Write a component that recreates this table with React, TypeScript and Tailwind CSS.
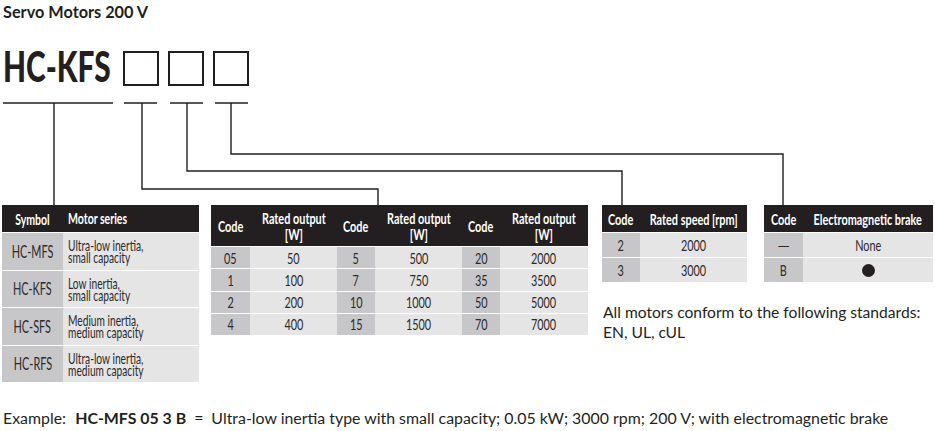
import React from "react";

const INK = "#231f20";

// Condensed look: Lato squeezed horizontally (no condensed face is installed)
const cond = "inline-block whitespace-nowrap scale-x-[0.68]";

const motorSeries = [
  { symbol: "HC-MFS", desc: ["Ultra-low inertia,", "small capacity"] },
  { symbol: "HC-KFS", desc: ["Low inertia,", "small capacity"] },
  { symbol: "HC-SFS", desc: ["Medium inertia,", "medium capacity"] },
  { symbol: "HC-RFS", desc: ["Ultra-low inertia,", "medium capacity"] },
];

const outputRows = [
  ["05", "50", "5", "500", "20", "2000"],
  ["1", "100", "7", "750", "35", "3500"],
  ["2", "200", "10", "1000", "50", "5000"],
  ["4", "400", "15", "1500", "70", "7000"],
];

const outputCols = ["w-[39px]", "w-[87px]", "w-[38px]", "w-[87px]", "w-[38px]", "w-[88px]"];

function Connectors() {
  return (
    <svg
      className="absolute left-0 top-0 pointer-events-none"
      width={935}
      height={431}
      viewBox="0 0 935 431"
      fill="none"
      stroke={INK}
      strokeWidth={1.4}
    >
      <path d="M3 103H113M54 103V205" />
      <path d="M124 103H157M142 103V189H378V205" />
      <path d="M170 103H203M187 103V171H622V205" />
      <path d="M215 103H248M231 103V154H783V205" />
    </svg>
  );
}

function HeadCell({ className, children }: { className: string; children: React.ReactNode }) {
  return (
    <div className={`flex min-w-0 items-center justify-center text-center leading-[16px] ${className}`}>
      <span className={cond}>{children}</span>
    </div>
  );
}

function MotorTable() {
  return (
    <div className="w-[197px]">
      <div className="flex h-[27px] bg-[#231f20] text-white font-bold text-[15.5px]">
        <HeadCell className="w-[61px]">Symbol</HeadCell>
        <div className="flex min-w-0 flex-1 items-center pl-[5px]">
          <span className={`${cond} origin-left`}>Motor series</span>
        </div>
      </div>
      {motorSeries.map((m) => (
        <div key={m.symbol} className="flex h-[37.5px] border-t border-white">
          <div className="flex w-[61px] items-center justify-center bg-[#c7c7c9] text-[17px] text-[#2b2b2b]">
            <span className="inline-block whitespace-nowrap scale-x-[0.64]">{m.symbol}</span>
          </div>
          <div className="flex min-w-0 flex-1 flex-col justify-center bg-[#e5e5e5] pl-[5px] text-[15px] leading-[12px] text-[#2b2b2b]">
            {m.desc.map((line) => (
              <span key={line} className={`${cond} origin-left`}>
                {line}
              </span>
            ))}
          </div>
        </div>
      ))}
    </div>
  );
}

function OutputTable() {
  const heads = ["Code", "Rated output", "Code", "Rated output", "Code", "Rated output"];
  return (
    <div className="ml-[12px] w-[377px]">
      <div className="flex h-[41px] bg-[#231f20] text-white font-bold text-[16px]">
        {heads.map((h, i) => (
          <HeadCell key={i} className={outputCols[i]}>
            {i % 2 === 0 ? (
              h
            ) : (
              <>
                {h}
                <br />
                [W]
              </>
            )}
          </HeadCell>
        ))}
      </div>
      {outputRows.map((row, r) => (
        <div key={r} className="flex h-[22.25px] border-t border-white text-[16px] text-[#2b2b2b]">
          {row.map((v, i) => (
            <div
              key={i}
              className={`flex items-center justify-center ${outputCols[i]} ${
                i % 2 === 0 ? "bg-[#c7c7c9]" : "bg-[#e5e5e5]"
              }`}
            >
              <span className={cond}>{v}</span>
            </div>
          ))}
        </div>
      ))}
    </div>
  );
}

function SmallTable({
  width,
  codeWidth,
  title,
  rows,
  className,
}: {
  width: string;
  codeWidth: string;
  title: string;
  rows: [string, React.ReactNode][];
  className?: string;
}) {
  return (
    <div className={`${width} ${className ?? ""}`}>
      <div className="flex h-[27px] bg-[#231f20] text-white font-bold text-[16px]">
        <HeadCell className={`shrink-0 ${codeWidth}`}>Code</HeadCell>
        <HeadCell className="flex-1">{title}</HeadCell>
      </div>
      {rows.map(([code, value], i) => (
        <div key={i} className="flex h-[25px] border-t border-white text-[16px] text-[#2b2b2b]">
          <div className={`flex shrink-0 items-center justify-center bg-[#c7c7c9] ${codeWidth}`}>
            {code === "\u2014" ? <span>{code}</span> : <span className={cond}>{code}</span>}
          </div>
          <div className="flex min-w-0 flex-1 items-center justify-center bg-[#e5e5e5]">
            {typeof value === "string" ? <span className={cond}>{value}</span> : value}
          </div>
        </div>
      ))}
    </div>
  );
}

export default function App() {
  return (
    <div className="relative h-[431px] w-[935px] overflow-hidden bg-white font-['Lato',sans-serif] text-[#231f20]">
      <div className="h-[205px]">
        <div className="pl-[3px] pt-[3px] text-[16.3px] font-bold leading-[18px]">Servo Motors 200 V</div>
        <div className="mt-[19.7px] flex items-start pl-[3px]">
          <div className="w-[120px] text-[42px] font-black leading-[50px]">
            <span className="inline-block origin-left scale-x-[0.71] whitespace-nowrap">HC-KFS</span>
          </div>
          <div className="mt-[10.3px] flex gap-[9px]">
            <div className="h-[35px] w-[36px] border-2 border-[#231f20]" />
            <div className="h-[35px] w-[36px] border-2 border-[#231f20]" />
            <div className="h-[35px] w-[36px] border-2 border-[#231f20]" />
          </div>
        </div>
      </div>

      <div className="flex h-[203.5px] items-start pl-[2px]">
        <MotorTable />
        <OutputTable />
        <div className="ml-[14px] flex flex-col">
          <div className="flex items-start">
            <SmallTable
              width="w-[145px]"
              codeWidth="w-[38px]"
              title="Rated speed [rpm]"
              rows={[
                ["2", "2000"],
                ["3", "3000"],
              ]}
            />
            <SmallTable
              className="ml-[17px]"
              width="w-[169px]"
              codeWidth="w-[39px]"
              title="Electromagnetic brake"
              rows={[
                ["\u2014", "None"],
                ["B", <div className="h-[13px] w-[13px] rounded-full bg-[#231f20]" />],
              ]}
            />
          </div>
          <div className="mt-[20px] pl-[1px] text-[15.6px] leading-[20px] text-[#231f20]">
            All motors conform to the following standards:
            <br />
            EN, UL, cUL
          </div>
        </div>
      </div>

      <div className="pl-[3px] text-[15.9px] leading-[18px]">
        Example: <span className="ml-[5px] font-bold">HC-MFS 05 3 B</span>
        <span className="mx-[8px]">=</span>
        Ultra-low inertia type with small capacity; 0.05 kW; 3000 rpm; 200 V; with electromagnetic brake
      </div>

      <Connectors />
    </div>
  );
}
